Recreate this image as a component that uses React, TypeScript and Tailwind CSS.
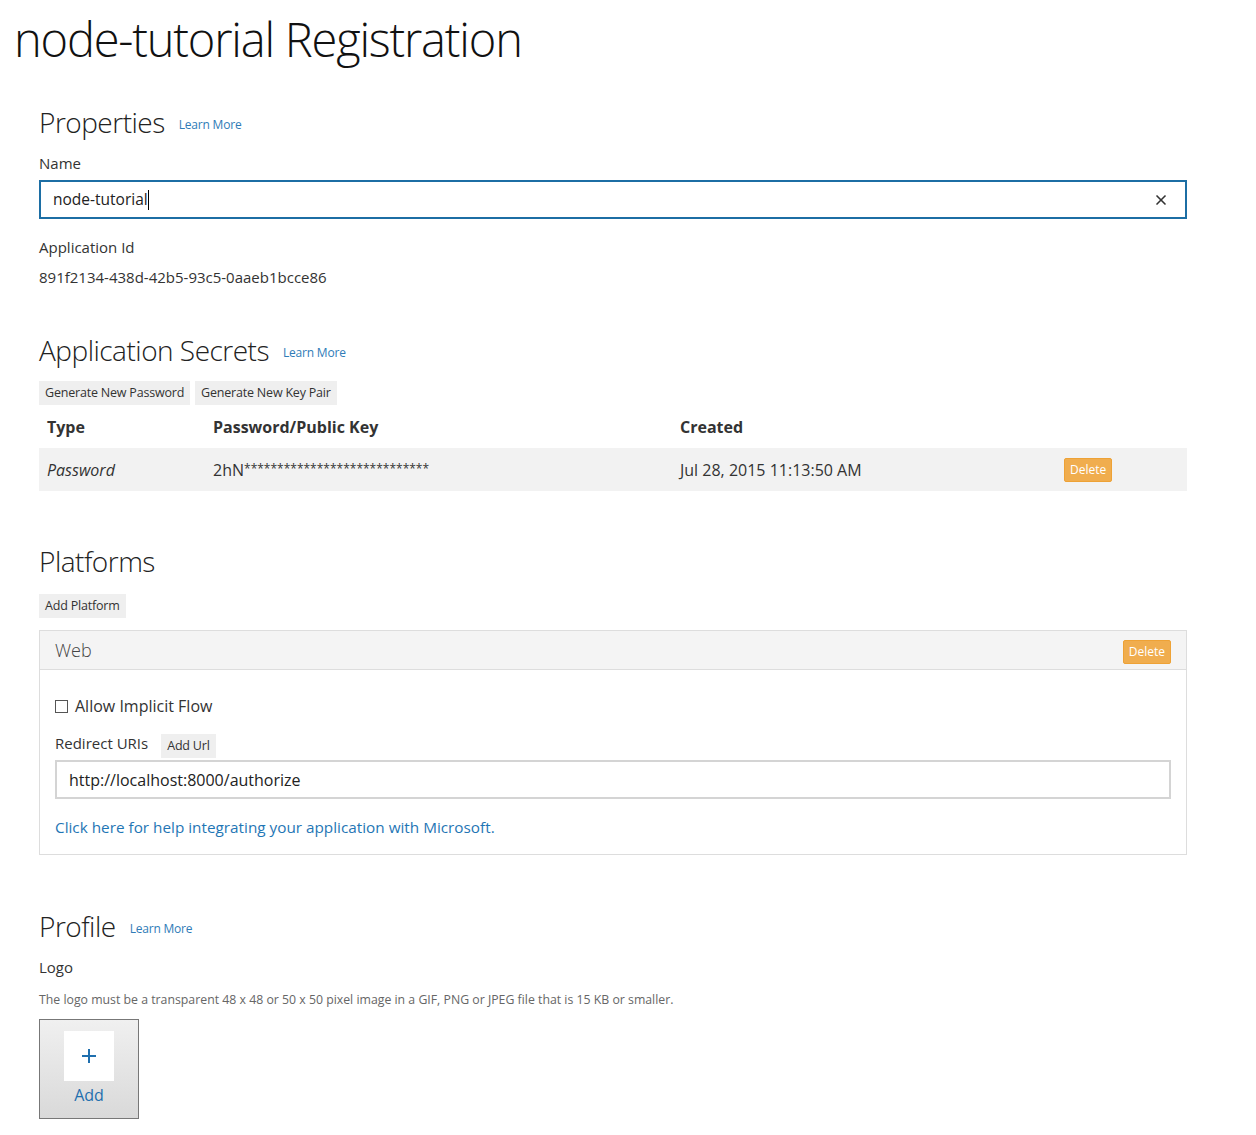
import { X } from "lucide-react";

const font = { fontFamily: '"Open Sans", "Noto Sans", sans-serif' };

function LearnMore() {
  return <a className="ml-[14px] mt-[6px] text-[12px] text-[#2f7cb7] tracking-[-0.2px]">Learn More</a>;
}

function GrayButton({ label }: { label: string }) {
  return (
    <button className="h-[24px] px-[6px] bg-[#efefef] text-[12.5px] text-[#333] leading-[24px] tracking-[-0.2px]">{label}</button>
  );
}

function OrangeButton() {
  return (
    <button className="h-[24px] px-[5px] bg-[#f0ad4e] border border-[#eea236] rounded-[2px] text-[12px] text-white leading-[20px]">
      Delete
    </button>
  );
}

export default function App() {
  return (
    <div className="bg-white text-[#333] min-h-[1135px] pl-[14px] pr-[69px]" style={font}>
      <h1 className="text-[47px] font-light text-[#111] leading-[78px] tracking-[-1.2px]">node-tutorial Registration</h1>

      <div className="pl-[25px]">
        {/* Properties */}
        <div className="mt-[24px] flex items-center">
          <h2 className="text-[28px] font-light leading-[40px] text-[#222] tracking-[-0.5px]">Properties</h2>
          <LearnMore />
        </div>
        <div className="mt-[11px] text-[15px] leading-[20px]">Name</div>
        <div className="mt-[7px] h-[39px] border-2 border-[#1c6ea4] flex items-center pl-[12px] pr-[16px]">
          <span className="text-[15.5px] text-[#222]">node-tutorial</span>
          <span className="w-px h-[20px] bg-black" />
          <span className="flex-1" />
          <X size={16} strokeWidth={2.5} className="text-[#333]" />
        </div>
        <div className="mt-[17px] text-[15px] leading-[22px]">Application Id</div>
        <div className="mt-[8px] text-[15px] leading-[22px]">891f2134-438d-42b5-93c5-0aaeb1bcce86</div>

        {/* Secrets */}
        <div className="mt-[42px] flex items-center">
          <h2 className="text-[28px] font-light leading-[40px] text-[#222] tracking-[-0.5px]">Application Secrets</h2>
          <LearnMore />
        </div>
        <div className="mt-[11px] flex gap-[5px]">
          <GrayButton label="Generate New Password" />
          <GrayButton label="Generate New Key Pair" />
        </div>
        <div className="h-[43px] flex items-center text-[16px] font-bold text-[#333]">
          <div className="w-[174px] pl-[8px]">Type</div>
          <div className="w-[467px]">Password/Public Key</div>
          <div>Created</div>
        </div>
        <div className="h-[43px] bg-[#f2f2f2] flex items-center text-[16px]">
          <div className="w-[174px] pl-[8px] italic">Password</div>
          <div className="w-[467px]">
            2hN<span className="text-[12px] align-[3px]">****************************</span>
          </div>
          <div className="w-[384px]">Jul 28, 2015 11:13:50 AM</div>
          <OrangeButton />
        </div>

        {/* Platforms */}
        <div className="mt-[50px]">
          <h2 className="text-[28px] font-light leading-[40px] text-[#222] tracking-[-0.5px]">Platforms</h2>
        </div>
        <div className="mt-[11px]">
          <GrayButton label="Add Platform" />
        </div>
        <div className="mt-[12px] border border-[#ddd]">
          <div className="h-[39px] bg-[#f4f4f4] border-b border-[#ddd] flex items-center justify-between pl-[15px] pr-[15px]">
            <span className="text-[18px] font-light text-[#444]">Web</span>
            <span className="mt-[2px]">
              <OrangeButton />
            </span>
          </div>
          <div className="px-[15px] pt-[24px] pb-[15px]">
            <label className="flex items-center gap-[7px] text-[16px]">
              <span className="w-[13px] h-[13px] border border-[#555] bg-white" />
              Allow Implicit Flow
            </label>
            <div className="mt-[10px] flex items-center gap-[13px]">
              <span className="text-[15px]">Redirect URIs</span>
              <span className="mt-[4px]">
                <GrayButton label="Add Url" />
              </span>
            </div>
            <div className="mt-[2px] h-[39px] border-2 border-[#d4d4d4] flex items-center pl-[12px] text-[16px] text-[#222]">
              http://localhost:8000/authorize
            </div>
            <a className="mt-[17px] block text-[15.3px] text-[#1f76b5]">Click here for help integrating your application with Microsoft.</a>
          </div>
        </div>

        {/* Profile */}
        <div className="mt-[51px] flex items-center">
          <h2 className="text-[28px] font-light leading-[40px] text-[#222] tracking-[-0.5px]">Profile</h2>
          <LearnMore />
        </div>
        <div className="mt-[11px] text-[15px] leading-[20px]">Logo</div>
        <div className="mt-[15px] text-[12.3px] text-[#666] leading-[16px]">
          The logo must be a transparent 48 x 48 or 50 x 50 pixel image in a GIF, PNG or JPEG file that is 15 KB or smaller.
        </div>
        <button className="mt-[11px] w-[100px] h-[100px] border border-[#777] bg-gradient-to-b from-[#f0f0f0] to-[#d9d9d9] flex flex-col items-center pt-[11px]">
          <span className="w-[50px] h-[50px] bg-white flex items-center justify-center">
            <svg width="16" height="16" viewBox="0 0 16 16">
              <path d="M8 1v14M1 8h14" stroke="#1f6fae" strokeWidth="2" />
            </svg>
          </span>
          <span className="mt-[2px] text-[16px] text-[#1f6fae]">Add</span>
        </button>
      </div>
    </div>
  );
}
